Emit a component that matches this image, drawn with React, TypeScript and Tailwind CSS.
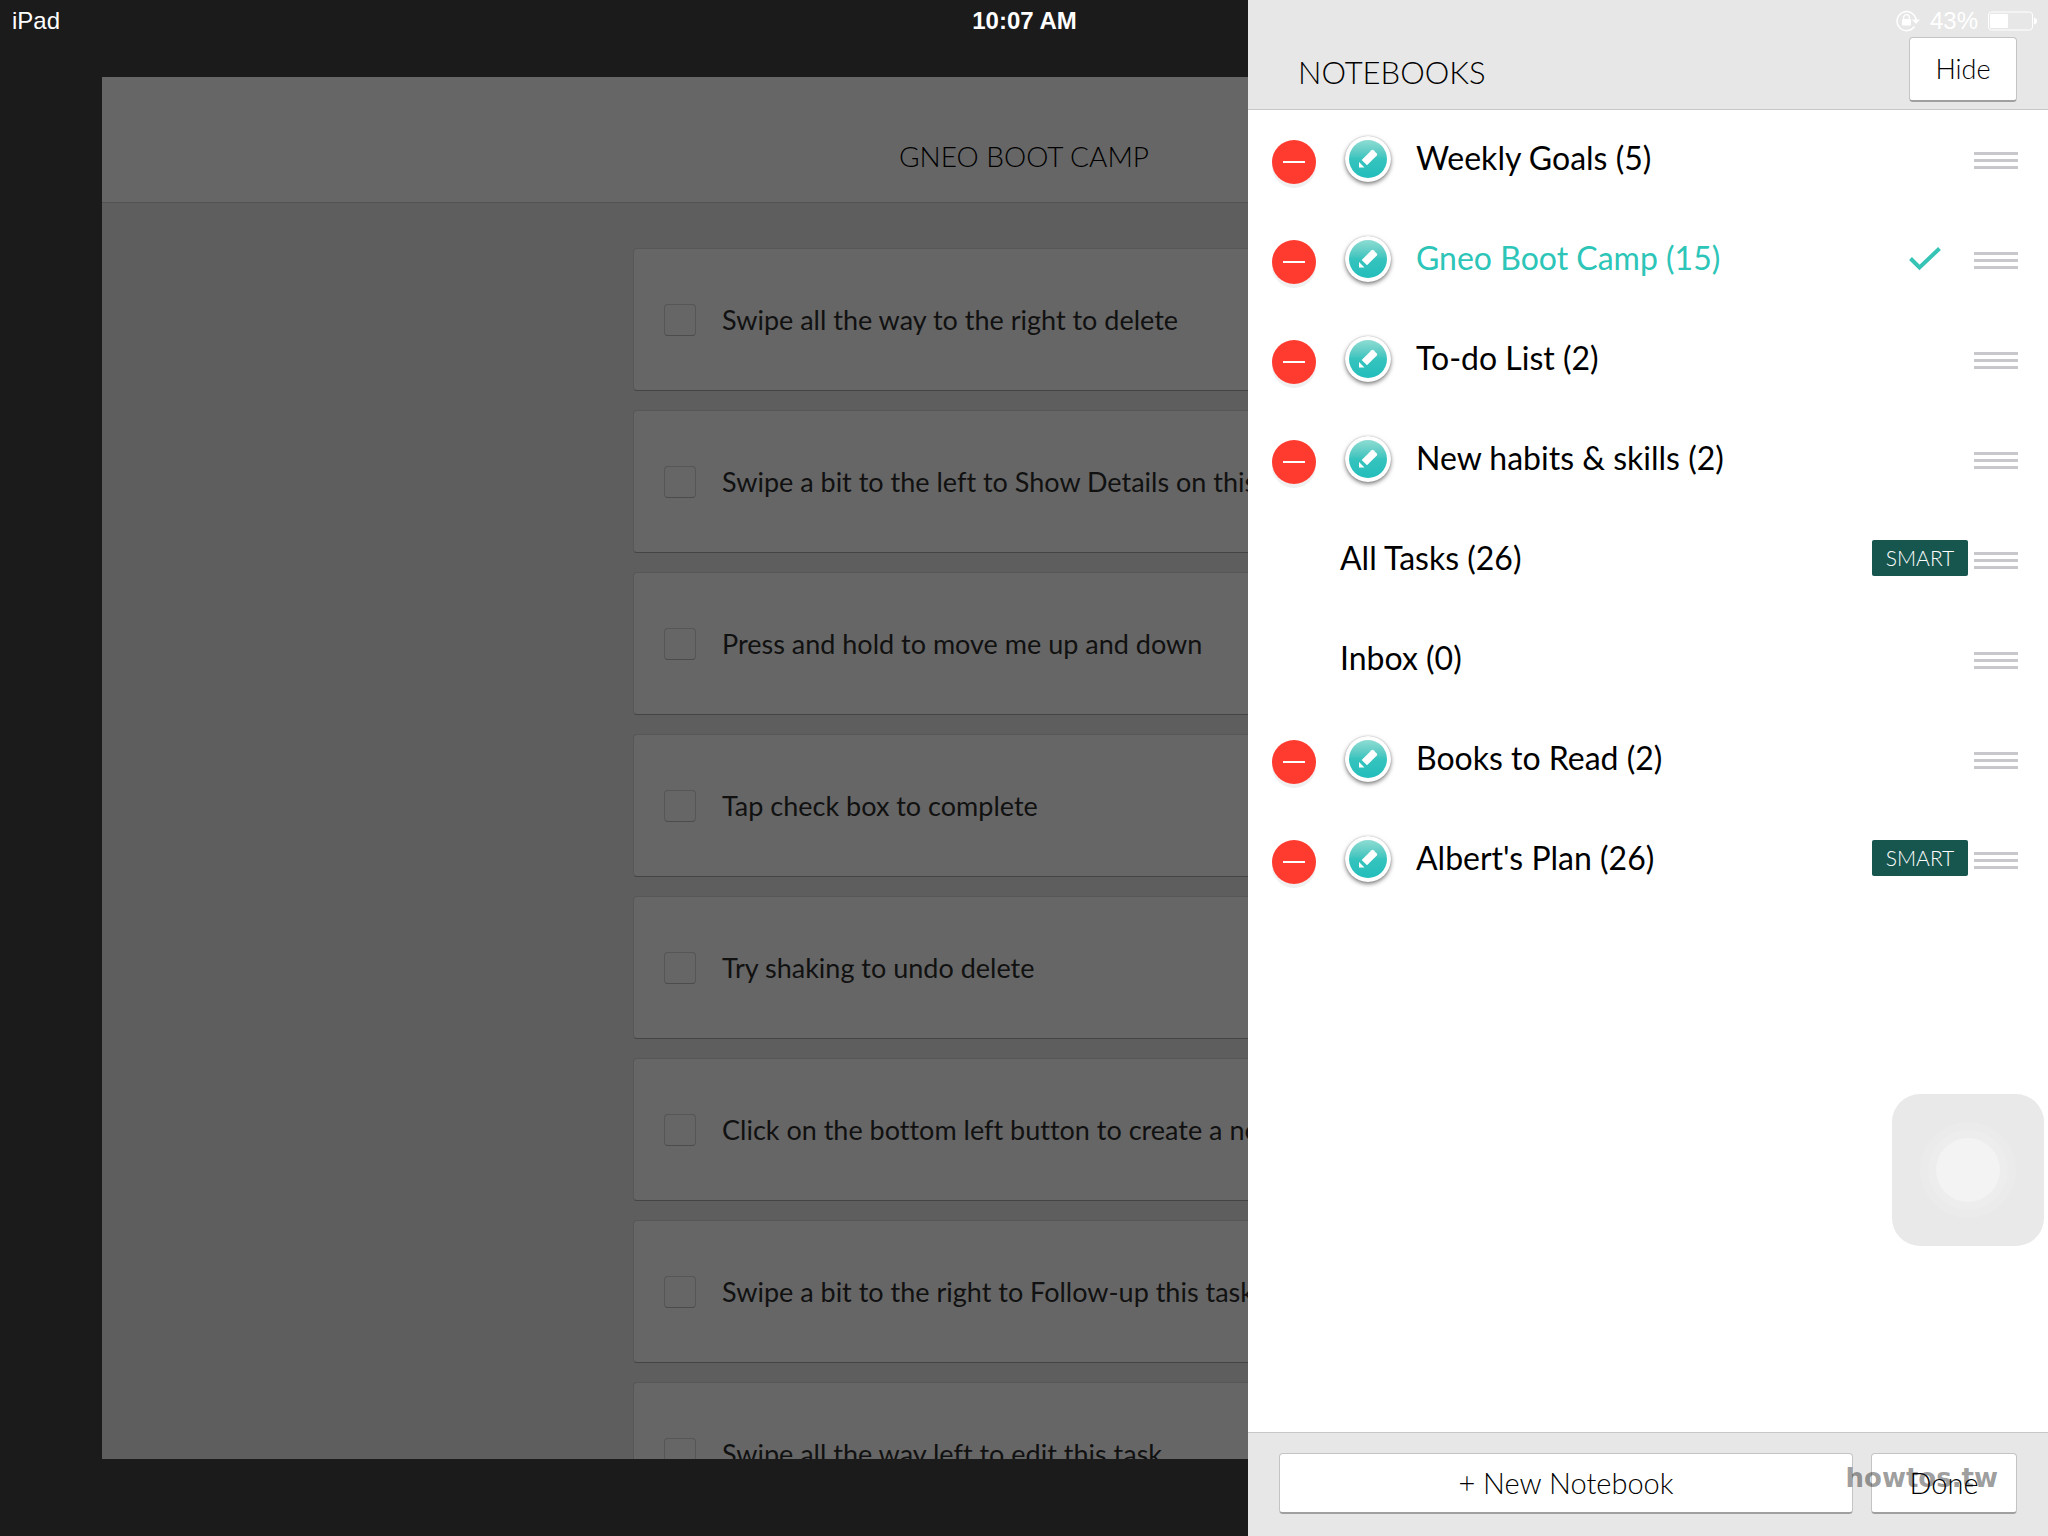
import { useState } from "react";

interface Notebook {
  name: string;
  count: number;
  locked?: boolean;
  smart?: boolean;
}

const notebooks: Notebook[] = [
  { name: "Weekly Goals", count: 5 },
  { name: "Gneo Boot Camp", count: 15 },
  { name: "To-do List", count: 2 },
  { name: "New habits & skills", count: 2 },
  { name: "All Tasks", count: 26, locked: true, smart: true },
  { name: "Inbox", count: 0, locked: true },
  { name: "Books to Read", count: 2 },
  { name: "Albert's Plan", count: 26, smart: true },
];

const tasks = [
  "Swipe all the way to the right to delete",
  "Swipe a bit to the left to Show Details on this task",
  "Press and hold to move me up and down",
  "Tap check box to complete",
  "Try shaking to undo delete",
  "Click on the bottom left button to create a new task",
  "Swipe a bit to the right to Follow-up this task",
  "Swipe all the way left to edit this task",
];

export default function App() {
  const [selected, setSelected] = useState("Gneo Boot Camp");

  return (
    <div className="relative h-screen overflow-hidden bg-[#1b1b1b] font-['Lato',sans-serif] [font-variant-ligatures:none]">
      <Board />
      <StatusBar />
      <aside className="absolute inset-y-0 right-0 flex w-[800px] max-w-full flex-col bg-white">
        <header className="flex h-[110px] shrink-0 items-end justify-between border-b border-[#c8c8c8] bg-[#e7e7e7] pr-[31px] pb-[7px] pl-[50px]">
          <h2 className="pb-[10px] text-[31px] leading-[40px] font-light text-black">NOTEBOOKS</h2>
          <button className="h-[65px] w-[108px] rounded border border-b-2 border-[#c4c4c4] border-b-[#a0a0a0] bg-white text-[27px] font-light text-black">
            Hide
          </button>
        </header>
        <ul className="flex-1 overflow-hidden">
          {notebooks.map((notebook) => (
            <NotebookRow
              key={notebook.name}
              notebook={notebook}
              selected={notebook.name === selected}
              onSelect={() => setSelected(notebook.name)}
            />
          ))}
        </ul>
        <footer className="relative flex h-[104px] shrink-0 items-start gap-[18px] border-t border-[#c8c8c8] bg-[#e7e7e7] pt-5 pr-[31px] pl-[31px]">
          <button className="h-[61px] flex-1 rounded border border-b-2 border-[#c4c4c4] border-b-[#a0a0a0] bg-white text-[29px] font-light text-black">
            + New Notebook
          </button>
          <button className="h-[61px] w-[146px] rounded border border-b-2 border-[#c4c4c4] border-b-[#a0a0a0] bg-white text-[29px] font-light text-black">
            Done
          </button>
          <span className="pointer-events-none absolute top-[29px] right-[50px] font-['DejaVu_Sans',sans-serif] text-[26px] leading-8 font-bold text-black/40">
            howtos.tw
          </span>
        </footer>
      </aside>
      <AssistiveTouch />
    </div>
  );
}

function StatusBar() {
  return (
    <div className="pointer-events-none absolute inset-x-0 top-0 z-10 grid h-[42px] grid-cols-3 items-center pr-[11px] pl-3 font-['Liberation_Sans',sans-serif] text-[24px] leading-none text-white">
      <span>iPad</span>
      <span className="text-center font-bold">10:07 AM</span>
      <span className="flex items-center justify-end gap-[10px]">
        <svg width="24" height="22" viewBox="0 0 24 22" fill="none">
          <path d="M18.4 16.5A9.5 9.5 0 1 1 20 10" stroke="white" strokeWidth="1.5" />
          <path d="M16 9.5h8l-4 4.5z" fill="white" />
          <rect x="6" y="9" width="9" height="6.500" rx="1" fill="white" />
          <path d="M7.600 9.500V7.500a2.900 2.900 0 0 1 5.800 0v2" stroke="white" strokeWidth="1.300" />
        </svg>
        <span>43%</span>
        <svg width="49" height="20" viewBox="0 0 49 20" fill="none">
          <rect x="0.500" y="1" width="44" height="18" rx="3" stroke="white" />
          <rect x="2" y="3" width="18" height="14" rx="1" fill="white" />
          <path d="M46 6.500c4 .5 4 6.500 0 7z" fill="white" />
        </svg>
      </span>
    </div>
  );
}

function Board() {
  return (
    <main className="h-full pt-[77px] pb-[77px] pl-[102px]">
      <div className="flex h-full flex-col overflow-hidden bg-[#5e5e5e] pr-[102px]">
        <header className="-mr-[102px] flex h-[126px] shrink-0 items-center justify-center border-b border-[#525252] bg-[#666666] pt-8 pr-[102px]">
          <h1 className="text-[28px] leading-8 font-light text-black">GNEO BOOT CAMP</h1>
        </header>
        <ul className="mx-auto flex w-[782px] max-w-full flex-col gap-[19px] pt-[45px]">
          {tasks.map((task) => (
            <li key={task} className="shrink-0">
              <label className="flex h-[143px] items-center gap-[26px] rounded-sm border border-[#575757] border-b-[#444444] bg-[#666666] pl-[30px]">
                <input
                  type="checkbox"
                  className="size-8 shrink-0 appearance-none rounded border border-[#565656] border-b-[#4c4c4c]"
                />
                <span className="text-[27px] leading-8 whitespace-nowrap text-[#111111]">{task}</span>
              </label>
            </li>
          ))}
        </ul>
      </div>
    </main>
  );
}

function NotebookRow({
  notebook,
  selected,
  onSelect,
}: {
  notebook: Notebook;
  selected: boolean;
  onSelect: () => void;
}) {
  const { name, count, locked, smart } = notebook;

  return (
    <li className={`flex h-[100px] items-center pr-[30px] ${locked ? "pl-[92px]" : "pl-6"}`}>
      {!locked && (
        <>
          <button
            aria-label={`Delete ${name}`}
            className="mt-1 flex size-11 items-center justify-center rounded-full bg-[#ff3b30] shadow-[0_4px_0_#f0f0f0]"
          >
            <span className="h-[2px] w-[22px] bg-white" />
          </button>
          <PencilBadge />
        </>
      )}
      <button
        onClick={onSelect}
        className={`flex-1 pb-1 text-left text-[32px] leading-10 ${selected ? "text-[#2cc5b8]" : "text-black"}`}
      >
        {name} ({count})
      </button>
      {selected && (
        <svg className="mr-[33px] mb-[2px]" width="32" height="24" viewBox="0 0 32 24" fill="none">
          <path d="M1.500 11.500l9 9L30.500 1.500" stroke="#35c4b5" strokeWidth="4" />
        </svg>
      )}
      {smart && (
        <span className="mr-[6px] mb-1 h-9 w-24 rounded-xs bg-[#17564f] text-center text-[21px] leading-9 font-light text-white">
          SMART
        </span>
      )}
      <button aria-label={`Move ${name}`} className="flex w-11 flex-col gap-1">
        <span className="h-[3px] bg-[#c7c7cc]" />
        <span className="h-[3px] bg-[#c7c7cc]" />
        <span className="h-[3px] bg-[#c7c7cc]" />
      </button>
    </li>
  );
}

function PencilBadge() {
  return (
    <span className="mr-[25px] mb-[2px] ml-[29px] flex size-[46px] items-center justify-center rounded-full bg-white shadow-[0_0_1px_rgba(0,0,0,0.3),0_2px_4px_rgba(0,0,0,0.5)]">
      <span className="flex size-[38px] items-center justify-center rounded-full bg-linear-to-b from-[#8ddcd3] via-[#35c3bd] via-50% to-[#22bdbb]">
        <svg width="20" height="20" viewBox="0 0 20 20" fill="white">
          <path d="M13.500 1.200q1-.8 2 0l3.300 3.300q.8 1 0 2L9 16.300 3.700 11z" />
          <path d="M1 13l5.500 5.500H1z" />
        </svg>
      </span>
    </span>
  );
}

function AssistiveTouch() {
  return (
    <button
      aria-label="AssistiveTouch"
      className="absolute right-1 bottom-[290px] flex size-[152px] items-center justify-center rounded-[28px] bg-[#e9e9e9]"
    >
      <span className="flex size-24 items-center justify-center rounded-full bg-[#ebebeb]">
        <span className="flex size-20 items-center justify-center rounded-full bg-[#ededed]">
          <span className="size-16 rounded-full bg-[#f3f3f3]" />
        </span>
      </span>
    </button>
  );
}
